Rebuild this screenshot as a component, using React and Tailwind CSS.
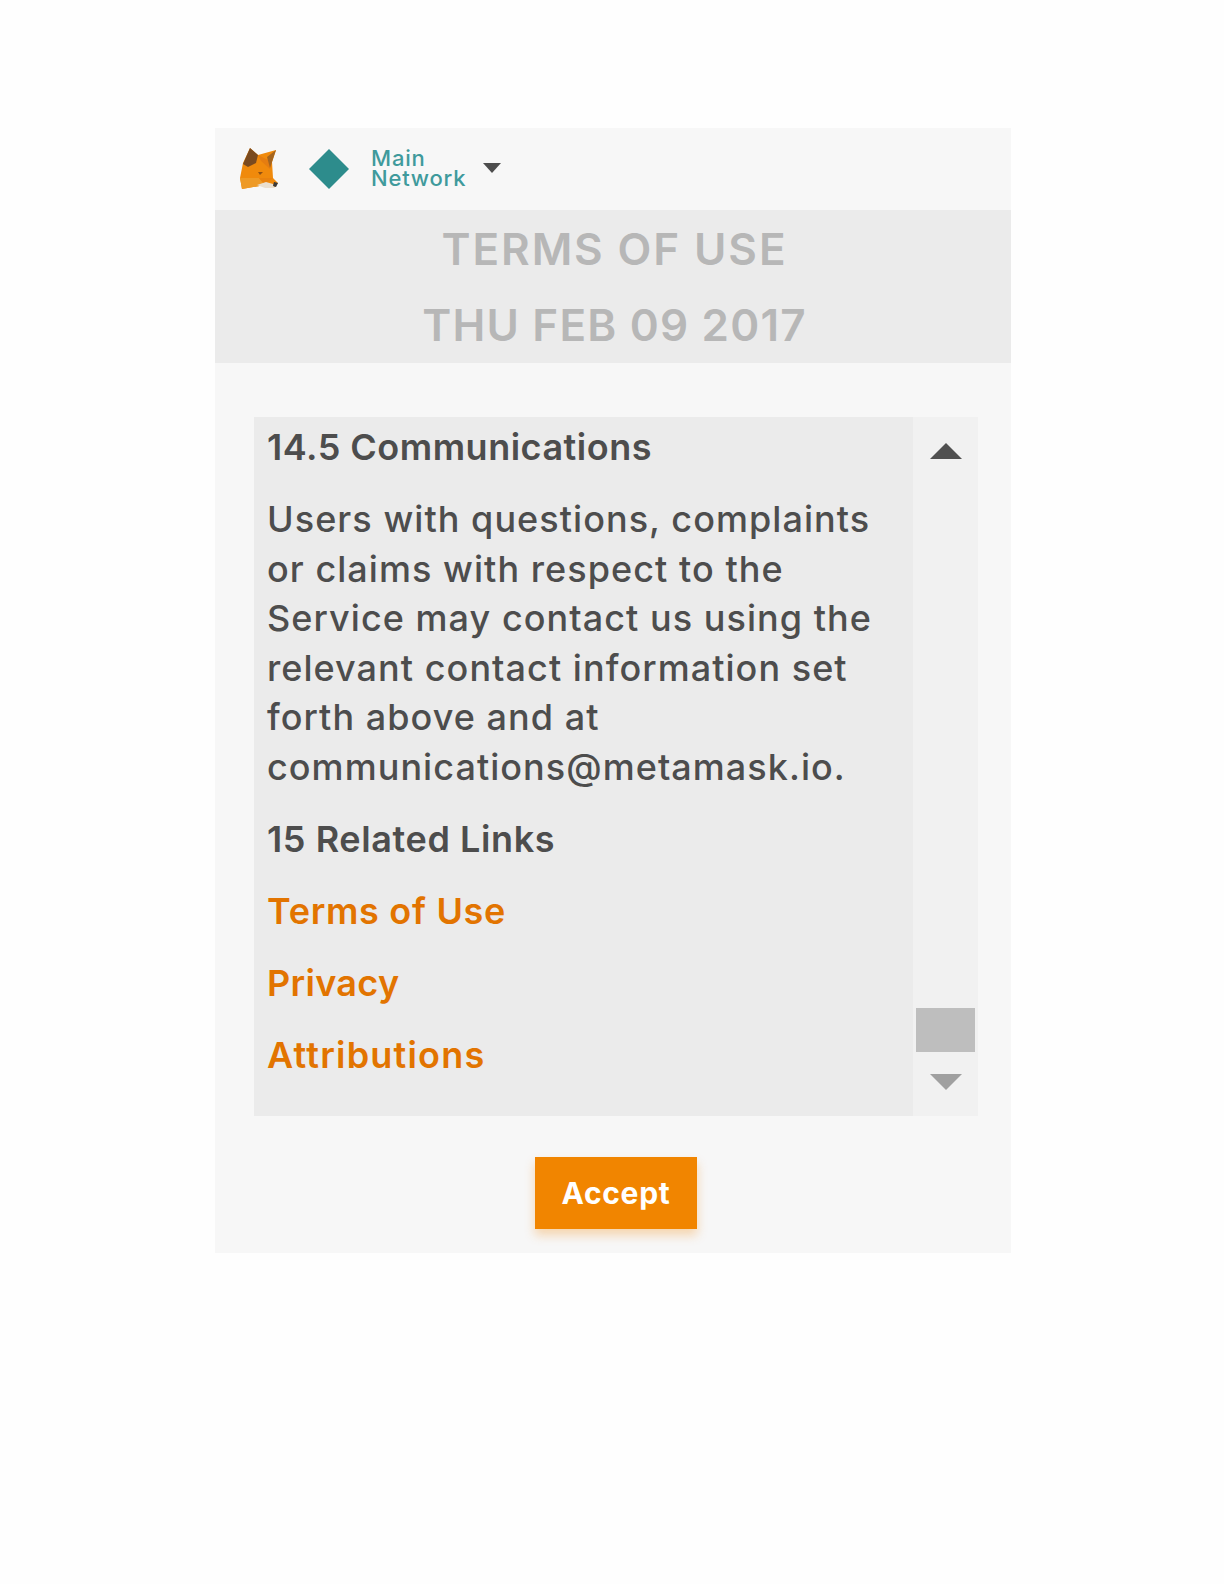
const font = { fontFamily: "Inter, 'Open Sans', sans-serif" };

function Fox() {
  return (
    <svg width="42" height="44" viewBox="0 0 42 44">
      <polygon points="11,1 19,8 37,3 33,15 34,31 39,36 36,40 26,38 3,42 1,31 4,16" fill="#f08a0c" />
      <polygon points="1,31 20,31 26,38 3,42" fill="#ee9a26" />
      <polygon points="19,8 33,15 31,22 22,14" fill="#e57d10" />
      <polygon points="20,31 34,31 28,36 26,38" fill="#e8820f" />
      <polygon points="11,1 19,8 17,16 9,20 4,17" fill="#7a4a1f" />
      <polygon points="28,10 37,3 33,15 31,21" fill="#a5651f" />
      <polygon points="18,38 27,35 34,37 36,41 26,41" fill="#eadfcf" />
      <polygon points="35,35 39,36 37,40 34,39" fill="#3a3a3a" />
      <polygon points="19,25 24,25 21,28" fill="#8f5114" />
    </svg>
  );
}

export default function App() {
  return (
    <div className="min-h-[1584px] bg-[#fefefe] pt-[128px]" style={font}>
      <div className="ml-[215px] flex h-[1125px] w-[796px] flex-col bg-[#f7f7f7]">
        <header className="flex h-[82px] items-center pl-[24px]">
          <Fox />
          <svg width="40" height="40" viewBox="0 0 40 40" className="ml-[28px]">
            <polygon points="20,0 40,20 20,40 0,20" fill="#2d8c8c" />
          </svg>
          <div className="mb-[2px] ml-[22px] text-[22px] font-medium leading-[20.5px] tracking-[0.8px] text-[#3f9a9c]">
            Main<br />Network
          </div>
          <svg width="18" height="10" viewBox="0 0 18 10" className="ml-[17px] mb-[3px]">
            <polygon points="0,0 18,0 9,10" fill="#4d4d4d" />
          </svg>
        </header>

        <div className="h-[153px] bg-[#ebebeb] pl-[3px] pt-[1px] text-center text-[44px] font-semibold leading-[76px] text-[#b7b7b7]">
          <div className="tracking-[1.9px]">TERMS OF USE</div>
          <div className="tracking-[1.2px]">THU FEB 09 2017</div>
        </div>

        <div className="ml-[39px] mt-[54px] flex h-[699px] w-[724px]">
          <div className="w-[659px] bg-[#ebebeb] pl-[13px] pt-[8px] text-[36px] text-[#4d4d4d]">
            <h2 className="text-[36px] font-semibold leading-[44px] tracking-[0.5px]">14.5 Communications</h2>
            <p className="mt-[26px] font-[450] leading-[49.5px] tracking-[1.05px]">
              Users with questions, complaints<br />
              or claims with respect to the<br />
              Service may contact us using the<br />
              relevant contact information set<br />
              forth above and at<br />
              communications@metamask.io.
            </p>
            <h2 className="mt-[25px] font-semibold leading-[44px] tracking-[0.6px]">15 Related Links</h2>
            <div className="mt-[28px] font-semibold leading-[44px] tracking-[0.7px] text-[#e27400]">Terms of Use</div>
            <div className="mt-[28px] font-semibold leading-[44px] tracking-[0.3px] text-[#e27400]">Privacy</div>
            <div className="mt-[28px] font-semibold leading-[44px] tracking-[1.2px] text-[#e27400]">Attributions</div>
          </div>
          <div className="flex w-[65px] flex-col items-center bg-[#f1f1f1]">
            <svg width="32" height="16" viewBox="0 0 32 16" className="mt-[26px]">
              <polygon points="16,0 32,16 0,16" fill="#505050" />
            </svg>
            <div className="mt-auto h-[44px] w-[59px] bg-[#bebebe]" />
            <svg width="32" height="16" viewBox="0 0 32 16" className="mb-[26px] mt-[22px]">
              <polygon points="0,0 32,0 16,16" fill="#a0a0a0" />
            </svg>
          </div>
        </div>

        <button className="ml-[320px] mt-[41px] h-[72px] w-[162px] bg-[#f18500] text-[30px] font-bold tracking-[0.7px] text-white shadow-[0_6px_10px_rgba(241,133,0,0.3)]">
          Accept
        </button>
      </div>
    </div>
  );
}
